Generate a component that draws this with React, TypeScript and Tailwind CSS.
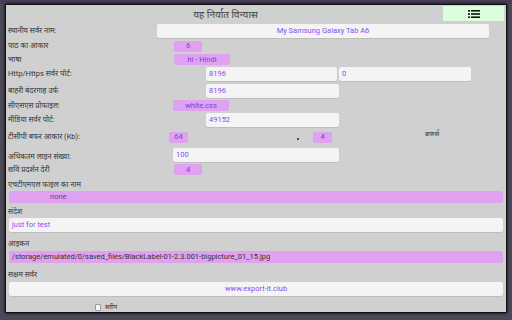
import React from 'react'

const font = { fontFamily: 'Roboto, "Noto Sans", "Liberation Sans", sans-serif' }

const Label = ({ text, w = "w-[151px]" }: { text: string; w?: string }) => (
	<span className={`${w} shrink-0 pl-[2px] text-[7.5px] text-[#333] whitespace-nowrap`}>{text}</span>
)

const Input = ({ value, className = "", align = "text-left" }: { value: string; className?: string; align?: string }) => (
	<div className={`h-[14px] bg-[#f4f4f4] rounded-[2px] shadow-[0_1px_0_#bdbdbd] flex items-center px-[3px] text-[7.5px] text-[#8a4cf5] ${align} ${className}`}>
		<span className="w-full">{value}</span>
	</div>
)

const Chip = ({ value, className = "" }: { value: string; className?: string }) => (
	<div className={`h-[11px] bg-[#e0a1f0] rounded-[2px] flex items-center justify-center text-[7.5px] text-[#7b3fe0] ${className}`}>
		{value}
	</div>
)

const App = () => {
	return (
		<div className="w-[512px] h-[320px] bg-[#4c4a58] relative overflow-hidden" style={font}>
			<div className="h-[4px] bg-[#4a3d58]" />
			<div className="ml-[5px] w-[502px] h-[309px] bg-[#d0d0d0] border border-[#111] shadow-[0_0_3px_#000] flex flex-col">
				{/* title */}
				<div className="flex h-[18px] shrink-0">
					<div className="flex-1 text-center text-[10px] text-[#444] leading-[20px] pl-[2px]">यह निर्यात विन्यास</div>
					<div className="w-[61px] h-[15px] mt-[1px] mr-[2px] bg-[#ddfddf] flex items-center justify-center">
						<svg width="12" height="8" viewBox="0 0 12 8">
							<rect x="0" y="0" width="2" height="1.6" fill="#111" />
							<rect x="3" y="0" width="9" height="1.6" fill="#111" />
							<rect x="0" y="3.2" width="2" height="1.6" fill="#111" />
							<rect x="3" y="3.2" width="9" height="1.6" fill="#111" />
							<rect x="0" y="6.4" width="2" height="1.6" fill="#111" />
							<rect x="3" y="6.4" width="9" height="1.6" fill="#111" />
						</svg>
					</div>
				</div>

				<div className="flex items-center h-[16px] shrink-0">
					<Label text="स्थानीय सर्वर नाम:" />
					<Input value="My Samsung Galaxy Tab A6" align="text-center" className="w-[332px]" />
				</div>

				<div className="flex items-center h-[14px] shrink-0">
					<Label text="पाठ का आकार" w="w-[168px]" />
					<Chip value="6" className="w-[28px]" />
				</div>

				<div className="flex items-center h-[13px] shrink-0">
					<Label text="भाषा" w="w-[168px]" />
					<Chip value="hi - Hindi" className="w-[56px]" />
				</div>

				<div className="flex items-center h-[16px] shrink-0">
					<Label text="Http/Https सर्वर पोर्ट:" w="w-[200px]" />
					<Input value="8196" className="w-[131px]" />
					<Input value="0" className="w-[132px] ml-[2px]" />
				</div>

				<div className="flex items-center h-[17px] shrink-0">
					<Label text="बाहरी बंदरगाह उर्फ" w="w-[200px]" />
					<Input value="8196" className="w-[133px]" />
				</div>

				<div className="flex items-center h-[13px] shrink-0">
					<Label text="सीएसएस प्रोफाइल:" w="w-[167px]" />
					<Chip value="white.css" className="w-[56px]" />
				</div>

				<div className="flex items-center h-[16px] shrink-0">
					<Label text="मीडिया सर्वर पोर्ट:" w="w-[200px]" />
					<Input value="49152" className="w-[133px]" />
				</div>

				<div className="flex items-center h-[18px] shrink-0">
					<Label text="टीसीपी बफर आकार (Kb):" w="w-[163px]" />
					<Chip value="64" className="w-[19px]" />
					<span className="ml-[109px] w-[2px] h-[2px] bg-[#222] rounded-full mt-[3px]" />
					<Chip value="4" className="w-[19px] ml-[14px]" />
					<span className="ml-[93px] text-[7px] text-[#333] -mt-[5px]">बफ़र्स</span>
				</div>

				<div className="flex items-end h-[16px] shrink-0">
					<Label text="अधिकतम लाइन संख्या:" w="w-[167px]" />
					<Input value="100" className="w-[166px]" />
				</div>

				<div className="flex items-end h-[14px] pb-[1px] shrink-0">
					<Label text="छवि प्रदर्शन देरी" w="w-[168px]" />
					<Chip value="4" className="w-[28px]" />
				</div>

				<div className="flex items-center h-[15px] shrink-0 pt-[2px]">
					<Label text="एचटीएमएल फाइल का नाम" />
				</div>
				<div className="h-[12px] mx-[3px] bg-[#e0a1f0] rounded-[2px] flex items-center pl-[41px] text-[7.5px] text-[#6b3bb5] shrink-0">
					none
				</div>

				<div className="flex items-center h-[15px] shrink-0 pt-[3px]">
					<Label text="संदेश" />
				</div>
				<div className="mx-[3px] shrink-0">
					<Input value="just for test" />
				</div>

				<div className="flex items-center h-[19px] shrink-0 pt-[4px]">
					<Label text="आइकन" />
				</div>
				<div className="h-[12px] mx-[3px] bg-[#e0a1f0] rounded-[2px] flex items-center pl-[3px] text-[7.5px] text-[#333] shrink-0 overflow-hidden whitespace-nowrap">
					/storage/emulated/0/saved_files/BlackLabel-01-2.3.001-bigpicture_01_15.jpg
				</div>

				<div className="flex items-center h-[19px] shrink-0 pt-[4px]">
					<Label text="सक्षम सर्वर" />
				</div>
				<div className="mx-[3px] shrink-0">
					<Input value="www.export-it.club" align="text-center" />
				</div>

				<div className="flex items-end h-[15px] shrink-0 pl-[89px] gap-[4px]">
					<span className="w-[6px] h-[7px] bg-[#f6f6f6] border border-[#999] rounded-[1px]" />
					<span className="text-[6.5px] text-[#333] leading-[8px]">स्लीप</span>
				</div>
			</div>
		</div>
	)
}

export default App
